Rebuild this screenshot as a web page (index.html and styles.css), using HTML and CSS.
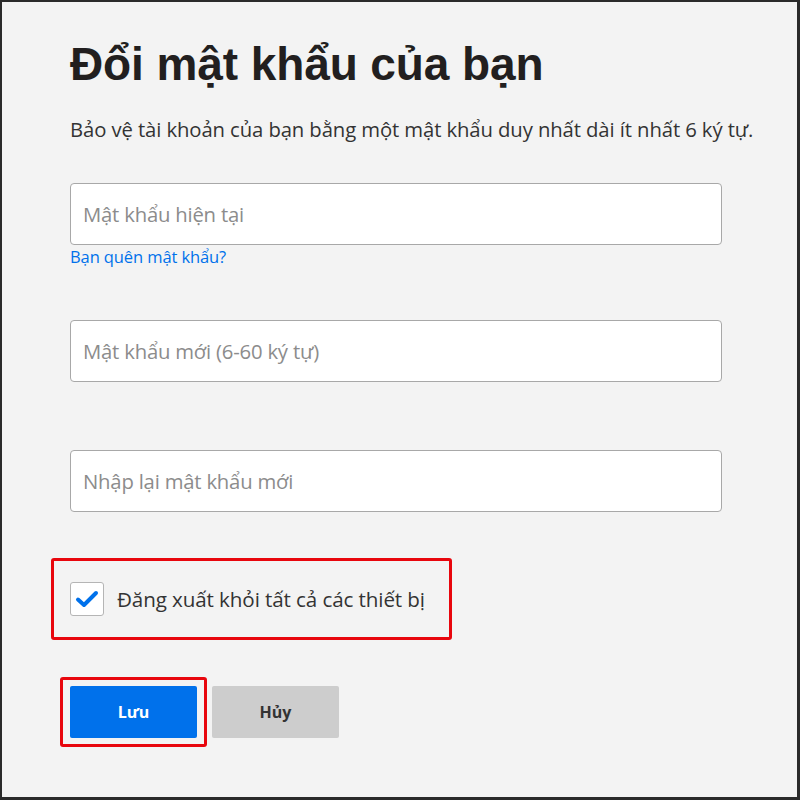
FILE: index.html
```html
<!DOCTYPE html>
<html lang="vi">
<head>
<meta charset="utf-8">
<link rel="stylesheet" href="styles.css">
</head>
<body>
<div class="frame">
  <main class="content">
    <h1 class="title">Đổi mật khẩu của bạn</h1>
    <p class="lead">Bảo vệ tài khoản của bạn bằng một mật khẩu duy nhất dài ít nhất 6 ký tự.</p>
    <div class="field first">
      <div class="input"><span class="ph">Mật khẩu hiện tại</span></div>
      <a class="forgot">Bạn quên mật khẩu?</a>
    </div>
    <div class="field second">
      <div class="input"><span class="ph">Mật khẩu mới (6-60 ký tự)</span></div>
    </div>
    <div class="field third">
      <div class="input"><span class="ph">Nhập lại mật khẩu mới</span></div>
    </div>
    <div class="check-wrap">
      <div class="check-row">
        <span class="box">
          <svg width="24" height="20" viewBox="0 0 24 20"><path d="M3 10.5 L9 16 L21 4" fill="none" stroke="#0071eb" stroke-width="4" stroke-linecap="round" stroke-linejoin="round"/></svg>
        </span>
        <span class="label">Đăng xuất khỏi tất cả các thiết bị</span>
      </div>
    </div>
    <div class="actions">
      <div class="save-wrap"><button class="btn save">Lưu</button></div>
      <button class="btn cancel">Hủy</button>
    </div>
  </main>
</div>
</body>
</html>
```
FILE: styles.css
```css
* { box-sizing: border-box; }
html, body { margin: 0; padding: 0; }
body { width: 800px; height: 800px; background: #1a1a1a; font-family: "Open Sans", "Liberation Sans", Arial, sans-serif; }
.frame {
  width: 800px; height: 800px;
  background: #f3f3f3;
  border-top: 2px solid #2a2a2a;
  border-left: 2px solid #2a2a2a;
  border-right: 3px solid #2a2a2a;
  border-bottom: 3px solid #2a2a2a;
}
.content { padding: 0 0 0 68px; display: flex; flex-direction: column; }
.title {
  margin: 36px 0 0 0;
  font-family: "Liberation Sans", Arial, sans-serif;
  font-size: 46px; line-height: 52px; font-weight: 700; color: #221f1f;
  letter-spacing: -0.1px;
}
.lead {
  margin: 27px 0 0 0;
  font-size: 20.3px; line-height: 24px; color: #333;
  letter-spacing: -0.1px;
}
.field { display: flex; flex-direction: column; width: 652px; }
.field.first { margin-top: 42px; }
.field.second { margin-top: 53px; }
.field.third { margin-top: 68px; }
.input {
  height: 62px; background: #fff;
  border: 1px solid #a8a8a8; border-radius: 4px;
  display: flex; align-items: center; padding-left: 12px;
}
.ph { font-size: 20.3px; color: #8c8c8c; letter-spacing: -0.2px; }
.forgot { margin-top: 2px; font-size: 16.5px; line-height: 20px; color: #0071eb; letter-spacing: -0.1px; }
.check-wrap {
  margin: 46px 0 0 -19px;
  width: 401px; height: 82px;
  border: 3px solid #e8060d; border-radius: 3px;
  display: flex; align-items: center; padding-left: 16px;
}
.check-row { display: flex; align-items: center; gap: 13px; }
.box {
  width: 34px; height: 34px; background: #fff;
  border: 1px solid #b5b5b5; border-radius: 3px;
  display: flex; align-items: center; justify-content: center;
}
.label { font-size: 20.6px; color: #333; letter-spacing: -0.1px; }
.actions { margin-top: 37px; display: flex; align-items: center; margin-left: -10px; }
.save-wrap {
  border: 3px solid #e8060d; border-radius: 3px;
  padding: 6px 7px;
}
.btn {
  width: 127px; height: 52px; border: none; border-radius: 2px;
  font-family: inherit; font-size: 16px; font-weight: 700;
}
.save { background: #0071eb; color: #fff; display: block; }
.cancel { background: #cdcdcd; color: #333; margin-left: 5px; }
```
